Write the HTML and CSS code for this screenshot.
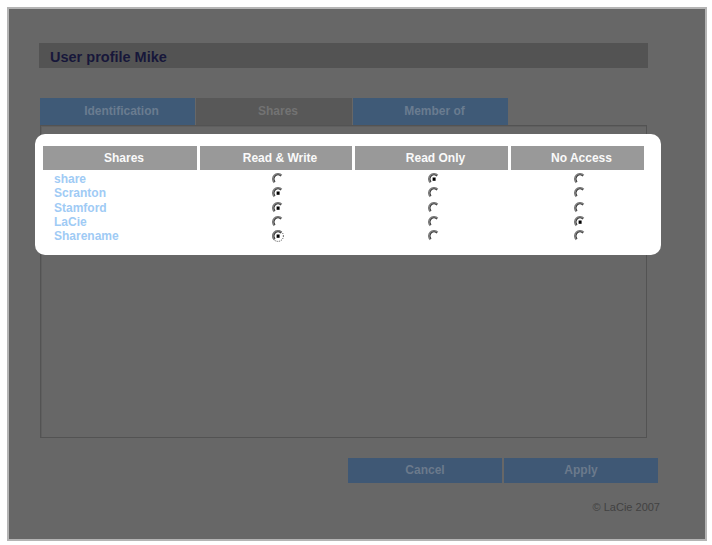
FILE: index.html
```html
<html>
<head>
<link rel="stylesheet" href="styles.css">
</head>
<body>
<svg class="defs" width="0" height="0">
  <symbol id="radio" viewBox="0 0 12 12">
    <path d="M2.2 9.8 A5.3 5.3 0 0 1 9.8 2.2" fill="none" stroke="#7a7a7a" stroke-width="1.3" />
    <path d="M3.1 8.9 A4.1 4.1 0 0 1 8.9 3.1" fill="none" stroke="#2a2a2a" stroke-width="1.1" />
  </symbol>
  <symbol id="radio-on" viewBox="0 0 12 12">
    <use href="#radio" />
    <rect x="4.6" y="4.5" width="3" height="3.3" fill="#000" />
  </symbol>
  <symbol id="radio-focus" viewBox="0 0 12 12">
    <circle cx="6" cy="6" r="5.4" fill="none" stroke="#444" stroke-width="1" stroke-dasharray="1 1" />
    <use href="#radio-on" />
  </symbol>
</svg>

<div class="frame">
  <div class="title">User profile Mike</div>

  <div class="tabs">
    <div class="tab">Identification</div>
    <div class="tab tab-current">Shares</div>
    <div class="tab">Member of</div>
  </div>

  <div class="panel">
    <div class="callout">
      <div class="grid">
        <div class="head">Shares</div>
        <div class="head">Read &amp; Write</div>
        <div class="head">Read Only</div>
        <div class="head">No Access</div>

        <a class="share">share</a>
        <div class="cell"><svg class="radio"><use href="#radio" /></svg></div>
        <div class="cell"><svg class="radio"><use href="#radio-on" /></svg></div>
        <div class="cell"><svg class="radio"><use href="#radio" /></svg></div>

        <a class="share">Scranton</a>
        <div class="cell"><svg class="radio"><use href="#radio-on" /></svg></div>
        <div class="cell"><svg class="radio"><use href="#radio" /></svg></div>
        <div class="cell"><svg class="radio"><use href="#radio" /></svg></div>

        <a class="share">Stamford</a>
        <div class="cell"><svg class="radio"><use href="#radio-on" /></svg></div>
        <div class="cell"><svg class="radio"><use href="#radio" /></svg></div>
        <div class="cell"><svg class="radio"><use href="#radio" /></svg></div>

        <a class="share">LaCie</a>
        <div class="cell"><svg class="radio"><use href="#radio" /></svg></div>
        <div class="cell"><svg class="radio"><use href="#radio" /></svg></div>
        <div class="cell"><svg class="radio"><use href="#radio-on" /></svg></div>

        <a class="share">Sharename</a>
        <div class="cell"><svg class="radio"><use href="#radio-focus" /></svg></div>
        <div class="cell"><svg class="radio"><use href="#radio" /></svg></div>
        <div class="cell"><svg class="radio"><use href="#radio" /></svg></div>
      </div>
    </div>
  </div>

  <div class="buttons">
    <div class="button">Cancel</div>
    <div class="button">Apply</div>
  </div>

  <div class="copyright">&copy; LaCie 2007</div>
</div>
</body>
</html>
```

FILE: styles.css
```css
* {
  box-sizing: border-box;
  margin: 0;
  padding: 0;
}

body {
  background: #ffffff;
  font-family: "Liberation Sans", Arial, sans-serif;
  font-size: 12px;
}

.defs {
  position: absolute;
}

.frame {
  margin: 7px 0 0 7px;
  width: 700px;
  height: 534px;
  border: 2px solid #b4b4b4;
  background: #676767;
  padding-top: 34px;
}

.title {
  margin-left: 30px;
  width: 609px;
  height: 25px;
  line-height: 25px;
  padding: 2px 0 0 11px;
  background: #535353;
  color: #17173a;
  font-size: 14.5px;
  font-weight: bold;
}

.tabs {
  display: flex;
  gap: 1px;
  margin: 30px 0 0 31px;
  height: 27px;
}

.tab {
  width: 155px;
  line-height: 27px;
  padding-left: 8px;
  text-align: center;
  background: #3f5a77;
  color: #6a7c90;
  font-weight: bold;
}

.tab-current {
  width: 156px;
  background: #585858;
  color: #737373;
}

.panel {
  margin-left: 31px;
  width: 607px;
  height: 313px;
  border: 1px solid #535353;
  box-shadow: inset 1px 1px 0 #5f5f5f;
  padding-top: 8px;
}

.callout {
  margin: 0 -15px 0 -6px;
  height: 121px;
  background: #ffffff;
  border-radius: 10px;
  padding: 12px 17px 0 8px;
}

.grid {
  display: grid;
  grid-template-columns: 154px 152px 153px 133px;
  grid-template-rows: 26px repeat(5, 14.25px);
  column-gap: 3px;
}

.head {
  height: 24px;
  line-height: 24px;
  padding-left: 8px;
  text-align: center;
  background: #999999;
  color: #fafafa;
  font-weight: bold;
}

.share {
  padding-left: 11px;
  line-height: 14.25px;
  color: #9fcbf5;
  font-weight: bold;
}

.cell {
  display: flex;
  justify-content: center;
  align-items: center;
  padding-left: 4px;
}

.radio {
  width: 12px;
  height: 12px;
}

.buttons {
  display: flex;
  gap: 2px;
  margin: 20px 0 0 339px;
  height: 25px;
}

.button {
  width: 154px;
  line-height: 25px;
  text-align: center;
  background: #3f5875;
  color: #6b7a8c;
  font-weight: bold;
}

.copyright {
  margin-top: 18px;
  width: 651px;
  line-height: 12px;
  text-align: right;
  color: #424242;
  font-size: 11px;
}
```
